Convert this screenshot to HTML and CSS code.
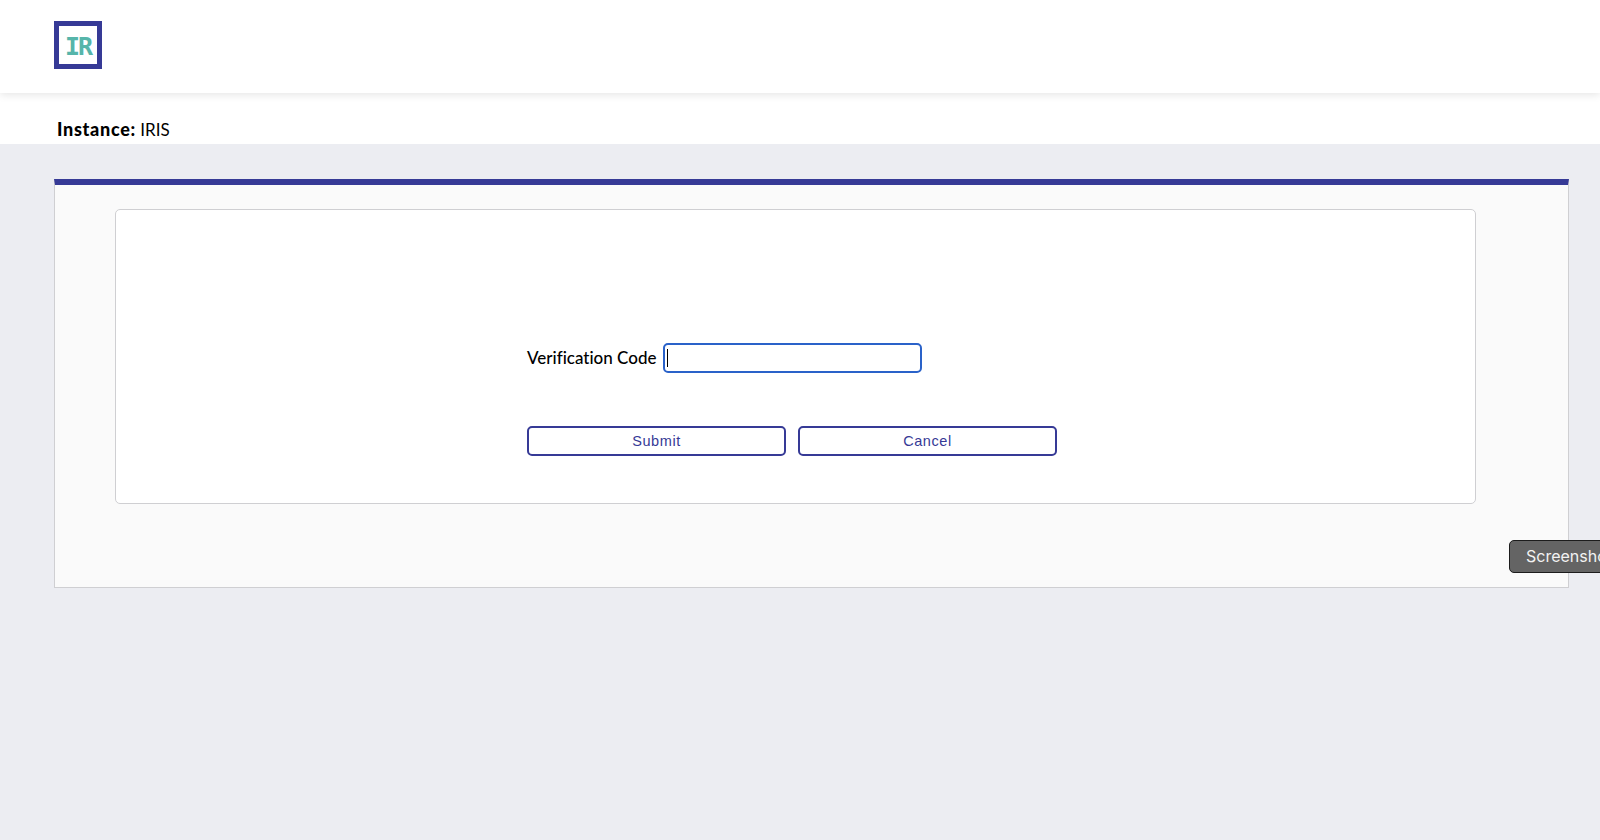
FILE: index.html
```html
<!DOCTYPE html>
<html lang="en">
<head>
    <meta charset="UTF-8">
    <title>Verification Code - IRIS</title>
    <link rel="stylesheet" href="styles.css">
</head>
<body>
    <header class="top-bar">
        <div class="logo"><span>IR</span></div>
    </header>
    <div class="instance-bar">
        <strong>Instance:</strong> IRIS
    </div>
    <main class="content">
        <section class="panel">
            <div class="form-card">
                <form class="verify-form">
                    <div class="form-group">
                        <label for="code">Verification Code</label>
                        <div class="code-input" id="code"><span class="caret"></span></div>
                    </div>
                    <div class="form-actions">
                        <button type="button">Submit</button>
                        <button type="button">Cancel</button>
                    </div>
                </form>
            </div>
        </section>
    </main>
    <button type="button" class="screenshot-btn">Screenshot</button>
</body>
</html>
```

FILE: styles.css
```css
:root {
    --primary-color: #363a96;
    --focus-color: #2a62c9;
    --background-color: #ecedf2;
    --panel-background: #fafafa;
    --border-color: #cfcfd2;
}

* {
    margin: 0;
    padding: 0;
    box-sizing: border-box;
}

body {
    background-color: var(--background-color);
    color: #000000;
    font-family: 'Lato', sans-serif;
    font-variant-ligatures: none;
    height: 840px;
    overflow: hidden;
    position: relative;
}

.top-bar {
    background-color: #ffffff;
    height: 93px;
    padding: 21px 54px 0;
    box-shadow: 0 2px 8px rgba(0, 0, 0, 0.1);
    position: relative;
}

.logo {
    width: 48px;
    height: 48px;
    border: 5px solid var(--primary-color);
    background-color: #ffffff;
    color: #56b5aa;
    font-family: 'DejaVu Sans Mono', monospace;
    font-size: 25px;
    font-weight: 700;
    letter-spacing: -2px;
    padding-top: 2px;
    display: flex;
    align-items: center;
    justify-content: center;
}

.instance-bar {
    background-color: #ffffff;
    height: 51px;
    padding: 25px 0 0 57px;
    font-size: 17px;
    line-height: 22px;
}

.instance-bar strong {
    font-size: 18px;
    font-weight: 900;
    letter-spacing: 0.7px;
}

.content {
    padding: 35px 31px 0 54px;
}

.panel {
    height: 409px;
    background-color: var(--panel-background);
    border: 1px solid var(--border-color);
    border-top: 6px solid var(--primary-color);
    padding: 24px 92px 0 60px;
}

.form-card {
    height: 295px;
    background-color: #ffffff;
    border: 1px solid var(--border-color);
    border-radius: 5px;
    padding: 133px 0 0 411px;
}

.form-group {
    display: flex;
    align-items: center;
    gap: 6px;
    height: 30px;
}

.form-group label {
    font-size: 17px;
    font-weight: 500;
    width: 130px;
    white-space: nowrap;
    padding-bottom: 2px;
}

.code-input {
    width: 259px;
    height: 30px;
    border: 2px solid var(--focus-color);
    border-radius: 5px;
    background-color: #ffffff;
    padding: 4px 0 0 2px;
}

.caret {
    display: block;
    width: 1px;
    height: 18px;
    background-color: #000000;
}

.form-actions {
    display: flex;
    gap: 12px;
    margin-top: 53px;
}

.form-actions button {
    width: 259px;
    height: 30px;
    background-color: #ffffff;
    border: 2px solid var(--primary-color);
    border-radius: 5px;
    color: var(--primary-color);
    font-family: 'Liberation Sans', sans-serif;
    font-size: 14.5px;
    letter-spacing: 0.6px;
    padding-bottom: 1px;
}

.screenshot-btn {
    position: absolute;
    left: 1509px;
    top: 540px;
    width: 130px;
    height: 33px;
    background-color: #646464;
    border: 1px solid #1c1c1c;
    border-radius: 5px;
    color: #f2f2f2;
    font-family: 'Inter', sans-serif;
    font-size: 16px;
    text-align: left;
    padding-left: 16px;
    padding-bottom: 1px;
}
```
